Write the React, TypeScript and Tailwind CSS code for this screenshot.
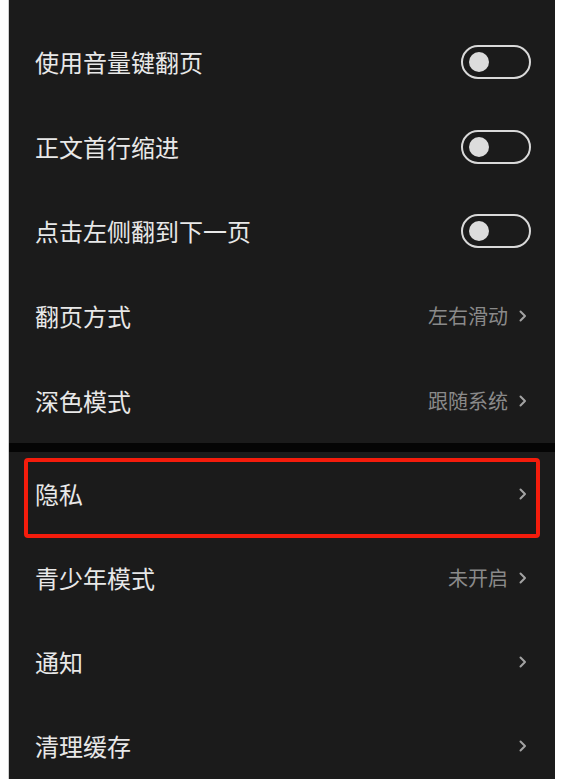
const font = { fontFamily: '"Noto Sans CJK SC", "Noto Sans", sans-serif' };

type Row = { label: string; toggle?: boolean; value?: string; arrow?: boolean };

const top: Row[] = [
  { label: '使用音量键翻页', toggle: true },
  { label: '正文首行缩进', toggle: true },
  { label: '点击左侧翻到下一页', toggle: true },
  { label: '翻页方式', value: '左右滑动', arrow: true },
  { label: '深色模式', value: '跟随系统', arrow: true },
];

const bottom: Row[] = [
  { label: '隐私', arrow: true },
  { label: '青少年模式', value: '未开启', arrow: true },
  { label: '通知', arrow: true },
  { label: '清理缓存', arrow: true },
];

const Chevron = () => (
  <svg width="8" height="12" viewBox="0 0 8 12" className="mr-[4px]">
    <path d="M1.5 1.5 L6 6 L1.5 10.5" fill="none" stroke="#a3a3a3" strokeWidth="2" strokeLinecap="round" strokeLinejoin="round" />
  </svg>
);

const Toggle = () => (
  <div className="w-[70px] h-[34px] rounded-full border-2 border-[#d9d9d9] flex items-center">
    <div className="w-[20px] h-[20px] rounded-full bg-[#dcdcdc] ml-[6px]" />
  </div>
);

const SettingRow = ({ row, h }: { row: Row; h: string }) => (
  <div className={`flex items-center justify-between pl-[26px] pr-[24px] ${h}`}>
    <span className="text-[24px] text-[#e8e8e8] leading-none">{row.label}</span>
    {row.toggle ? (
      <Toggle />
    ) : (
      <div className="flex items-center gap-[11px]">
        {row.value && <span className="text-[20px] text-[#8a8a8a] leading-none">{row.value}</span>}
        {row.arrow && <Chevron />}
      </div>
    )}
  </div>
);

export default function App() {
  return (
    <div className="w-[562px] h-[779px] bg-white overflow-hidden pl-[8px] pr-[7px]" style={font}>
      <div className="h-full bg-[#1b1b1b] border-l border-[#cfcfcf]">
        <div className="pt-[20px]">
          {top.map((r, i) => (
            <SettingRow key={i} row={r} h="h-[84.6px]" />
          ))}
        </div>
        <div className="h-[9px] bg-[#050505]" />
        <div>
          {bottom.map((r, i) =>
            i === 0 ? (
              <div key={i} className="relative">
                <SettingRow row={r} h="h-[84px]" />
                <div className="absolute left-[15px] right-[15px] top-[6px] h-[80px] border-[4px] border-[#f41c0c] rounded-[4px]" />
              </div>
            ) : (
              <SettingRow key={i} row={r} h="h-[84px]" />
            )
          )}
        </div>
      </div>
    </div>
  );
}
